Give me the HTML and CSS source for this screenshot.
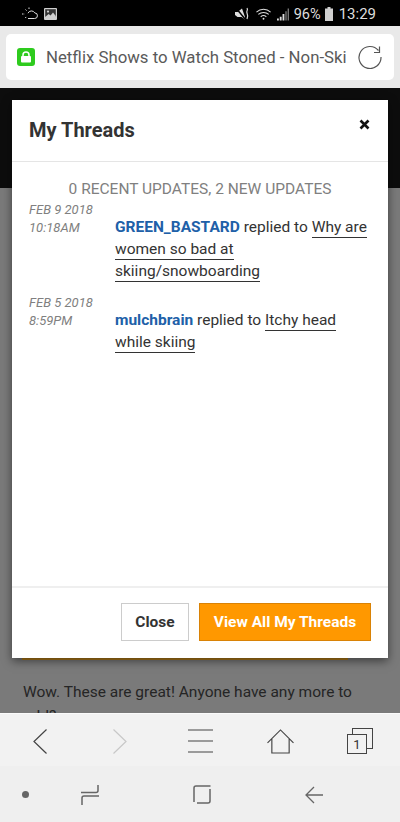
FILE: index.html
```html
<!DOCTYPE html>
<html lang="en">
<head>
  <meta charset="UTF-8" />
  <meta name="viewport" content="width=device-width, initial-scale=1.0"/>
  <title>My Threads</title>
  <link rel="stylesheet" href="styles.css">
</head>
<body>
  <div class="status-bar">
    <div class="status-left">
      <svg width="16" height="14" viewBox="0 0 16 14" fill="none" stroke="#ddd" stroke-width="1"><path d="M6 11.500h6.500a2.800 2.800 0 0 0 .3-5.600A3.800 3.800 0 0 0 6 6.200"/><path d="M0 7h2.500M3.500 2.500l1.200 1.200M3.200 11l1.200-1.200M7 .5v1.500" stroke-dasharray="1.500 .8"/></svg>
      <svg width="13" height="12" viewBox="0 0 13 12"><rect width="13" height="12" rx="1" fill="#cfcfcf"/><rect x="1.200" y="1.200" width="10.600" height="7.600" fill="#333"/><circle cx="4" cy="3.600" r="1.100" fill="#cfcfcf"/><path d="M1.200 9l3.400-3 2 1.600 2.400-3 2.800 3.400V9z" fill="#cfcfcf"/></svg>
    </div>
    <div class="status-right">
      <svg width="15" height="14" viewBox="0 0 15 14"><path d="M0 5h2.500L7 1.500l3 8.500v2.500L6.500 10H2.500L0 8z" fill="#ddd"/><path d="M1 1l9 11" stroke="#000" stroke-width="1.500"/><path d="M12 1c1.500 2-1 3 0 5s1 3 0 6" stroke="#ddd" stroke-width="1.200" fill="none"/></svg>
      <svg class="wifi" width="16" height="14" viewBox="0 0 17 14" fill="none" stroke="#ddd" stroke-width="1.100"><path d="M.5 5a11 11 0 0 1 15 0M2.500 7.500a8 8 0 0 1 11 0M5 10a4.500 4.500 0 0 1 6 0"/><circle cx="8" cy="12" r="1" fill="#ddd" stroke="none"/></svg>
      <svg class="signal" width="12" height="14" viewBox="0 0 13 14"><path d="M0 12h2v2H0zM3 10h2v4H3zM6 7h2v7H6z" fill="#ddd"/><path d="M9 4h1.500v10H9zM11.500 1H13v13h-1.500z" fill="#777"/></svg>
      <span class="pct">96%</span>
      <svg class="batt" width="8" height="14" viewBox="0 0 8 14"><path d="M2.500 0h3v1.500H8V14H0V1.500h2.500z" fill="#cfcfcf"/></svg>
      <span class="clock">13:29</span>
    </div>
  </div>

  <div class="url-area">
    <div class="url-box">
      <span class="lock-badge">
        <svg width="12" height="12" viewBox="0 0 12 12"><path d="M3 5.500V4a3 3 0 0 1 6 0v1.500" fill="none" stroke="#fff" stroke-width="1.500"/><rect x="1" y="5" width="10" height="6.500" rx="1" fill="#fff"/></svg>
      </span>
      <span class="url-text">Netflix Shows to Watch Stoned - Non-Ski</span>
      <svg class="reload" width="24" height="24" viewBox="0 0 24 24" fill="none" stroke="#555" stroke-width="1.200"><path d="M20.500 5.500A11 11 0 1 0 23 12"/><path d="M16 7.500h5.500V1.500"/></svg>
    </div>
  </div>

  <div class="page">
    <div class="page-dark"></div>
    <div class="page-body">
      <div class="hero-edge"></div>
      <p class="post">Wow. These are great! Anyone have any more to add?</p>
    </div>

    <div class="modal">
      <div class="modal-head">
        <h1>My Threads</h1>
        <span class="modal-x">
          <svg width="11" height="11" viewBox="0 0 11 11"><path d="M1.500 1.500l8 8M9.500 1.500l-8 8" stroke="#111" stroke-width="2.600"/></svg>
        </span>
      </div>
      <div class="modal-body">
        <div class="summary">0 RECENT UPDATES, 2 NEW UPDATES</div>
        <div class="thread">
          <div class="thread-date">FEB 9 2018<br>10:18AM</div>
          <div class="thread-text"><b>GREEN_BASTARD</b> replied to <a>Why are women so bad at skiing/snowboarding</a></div>
        </div>
        <div class="thread">
          <div class="thread-date">FEB 5 2018<br>8:59PM</div>
          <div class="thread-text"><b>mulchbrain</b> replied to <a>Itchy head while skiing</a></div>
        </div>
      </div>
      <div class="modal-foot">
        <button class="btn btn-close">Close</button>
        <button class="btn btn-view">View All My Threads</button>
      </div>
    </div>
  </div>

  <div class="browser-bar">
    <svg width="14" height="25" viewBox="0 0 14 25" fill="none" stroke="#444" stroke-width="1.200"><path d="M13.500 .5L1 12.500l12.500 12"/></svg>
    <svg width="14" height="25" viewBox="0 0 14 25" fill="none" stroke="#c8c8c8" stroke-width="1.200"><path d="M.5 .5L13 12.500 .5 24.500"/></svg>
    <svg width="25" height="24" viewBox="0 0 25 24" fill="none" stroke="#444" stroke-width="1.200"><path d="M0 1h25M0 12h25M0 23h25"/></svg>
    <svg width="27" height="25" viewBox="0 0 28 26" fill="none" stroke="#444" stroke-width="1.200"><path d="M.5 14.500L14 1l13.500 13.500M5 10.500V25h18V10.500"/></svg>
    <span class="tabs-icon">
      <span class="tab-back"></span>
      <span class="tab-front">1</span>
    </span>
  </div>

  <div class="nav-bar">
    <span class="nav-dot"></span>
    <svg width="18" height="20" viewBox="0 0 18 20" fill="none" stroke="#666" stroke-width="1.500"><path d="M17 0v5.500a2 2 0 0 1-2 2H0M18 11H3a2 2 0 0 0-2 2v7"/></svg>
    <svg width="18" height="19" viewBox="0 0 18 19" fill="none" stroke="#666" stroke-width="1.500"><path d="M1 17V3a2 2 0 0 1 2-2h14.500M17 4v12a2 2 0 0 1-2 2H4"/></svg>
    <svg width="18" height="18" viewBox="0 0 18 18" fill="none" stroke="#666" stroke-width="1.300"><path d="M18 9H1.500M9 1L1 9l8 8"/></svg>
  </div>
</body>
</html>
```

FILE: styles.css
```css
html, body {
  margin: 0;
  padding: 0;
}
body {
  width: 400px;
  height: 822px;
  display: flex;
  flex-direction: column;
  overflow: hidden;
  font-family: 'Roboto', sans-serif;
  background: #000;
  color: #333;
}

.status-bar {
  height: 26px;
  box-sizing: border-box;
  background: #000;
  display: flex;
  align-items: center;
  justify-content: space-between;
  padding: 2px 24px 0 22px;
  color: #ddd;
  flex: none;
}
.status-left, .status-right {
  display: flex;
  align-items: center;
}
.status-left {
  gap: 6px;
}
.wifi {
  margin-left: 6px;
}
.signal {
  margin-left: 5px;
}
.pct {
  font-size: 14.500px;
  margin-left: 5px;
}
.batt {
  margin-left: 4px;
}
.clock {
  font-size: 15px;
  margin-left: 6px;
}

.url-area {
  height: 62px;
  box-sizing: border-box;
  background: #e9e9e9;
  padding: 8px 6px 7px;
  flex: none;
}
.url-box {
  height: 46px;
  background: #fff;
  border-radius: 5px;
  display: flex;
  align-items: center;
  padding: 0 12px 0 11px;
}
.lock-badge {
  width: 18px;
  height: 18px;
  flex: none;
  background: #2ecb1e;
  border-radius: 3px;
  display: flex;
  align-items: center;
  justify-content: center;
}
.url-text {
  flex: none;
  margin-left: 11px;
  font-size: 16.800px;
  color: #5a5a5a;
  white-space: nowrap;
}
.reload {
  margin-left: auto;
}

.page {
  position: relative;
  height: 625px;
  flex: none;
  display: flex;
  flex-direction: column;
  background: #7a7a7a;
  overflow: hidden;
}
.page-dark {
  height: 100px;
  background: #0d0d0d;
  flex: none;
}
.page-body {
  flex: 1;
  display: flex;
  flex-direction: column;
  justify-content: flex-end;
  padding: 0 23px;
}
.hero-edge {
  width: 326px;
  height: 2px;
  background: #b07a18;
  margin: 0 0 20px -1px;
}
.post {
  margin: 0 0 -15px;
  font-size: 15.500px;
  line-height: 24px;
  color: #252525;
}

.modal {
  position: absolute;
  left: 12px;
  top: 12px;
  width: 376px;
  height: 558px;
  background: #fff;
  display: flex;
  flex-direction: column;
  box-shadow: 0 3px 9px rgba(0,0,0,0.5);
}
.modal-head {
  height: 61px;
  flex: none;
  border-bottom: 1px solid #e5e5e5;
  display: flex;
  align-items: center;
  justify-content: space-between;
  padding: 0 18px 0 17px;
}
.modal-head h1 {
  margin: 0 0 2px;
  font-size: 20px;
  font-weight: 700;
  color: #333;
}
.modal-x {
  display: flex;
  margin-bottom: 12px;
}
.modal-body {
  flex: 1;
  padding: 19px 17px 0;
}
.summary {
  text-align: center;
  font-size: 15.500px;
  line-height: 17px;
  margin-bottom: 3px;
  color: #808080;
}
.thread {
  display: flex;
  margin-bottom: 12px;
}
.thread-date {
  width: 86px;
  flex: none;
  font-size: 13px;
  font-style: italic;
  line-height: 18px;
  color: #808080;
}
.thread-text {
  font-size: 15.500px;
  line-height: 22px;
  margin-top: 15px;
  color: #333;
}
.thread-text b {
  color: #2060a8;
}
.thread-text a {
  border-bottom: 1px solid #333;
  padding-bottom: 1px;
}
.modal-foot {
  height: 72px;
  box-sizing: border-box;
  flex: none;
  border-top: 2px solid #efefef;
  display: flex;
  justify-content: flex-end;
  align-items: center;
  gap: 10px;
  padding: 0 17px 2px 0;
}
.btn {
  height: 38px;
  box-sizing: border-box;
  font-family: 'Roboto', sans-serif;
  font-size: 15.500px;
  font-weight: 700;
  padding: 0;
}
.btn-close {
  width: 68px;
  background: #fff;
  color: #333;
  border: 1px solid #ccc;
}
.btn-view {
  width: 172px;
  background: #ff9800;
  color: #fff;
  border: 1px solid #d98206;
}

.browser-bar {
  height: 53px;
  box-sizing: border-box;
  flex: none;
  background: #f2f2f2;
  border-top: 1px solid #fbfbfb;
  display: grid;
  grid-template-columns: repeat(5, 80px);
  align-items: center;
  justify-items: center;
  padding-top: 2px;
}
.tabs-icon {
  position: relative;
  width: 26px;
  height: 26px;
  display: block;
}
.tab-back {
  position: absolute;
  top: 0;
  right: 0;
  width: 19px;
  height: 19px;
  border: 1px solid #444;
}
.tab-front {
  position: absolute;
  left: 0;
  bottom: 0;
  width: 18px;
  height: 18px;
  background: #f2f2f2;
  border: 1px solid #444;
  font-size: 13px;
  line-height: 19px;
  text-align: center;
  color: #333;
}

.nav-bar {
  flex: 1;
  background: #efefef;
  display: flex;
  align-items: center;
  padding: 1px 0 0 22px;
}
.nav-bar svg {
  flex: none;
  margin-right: 94px;
}
.nav-bar svg:last-child {
  margin-right: 0;
}
.nav-dot {
  flex: none;
  width: 7px;
  height: 7px;
  border-radius: 50%;
  background: #666;
  margin-right: 52px;
}
```
